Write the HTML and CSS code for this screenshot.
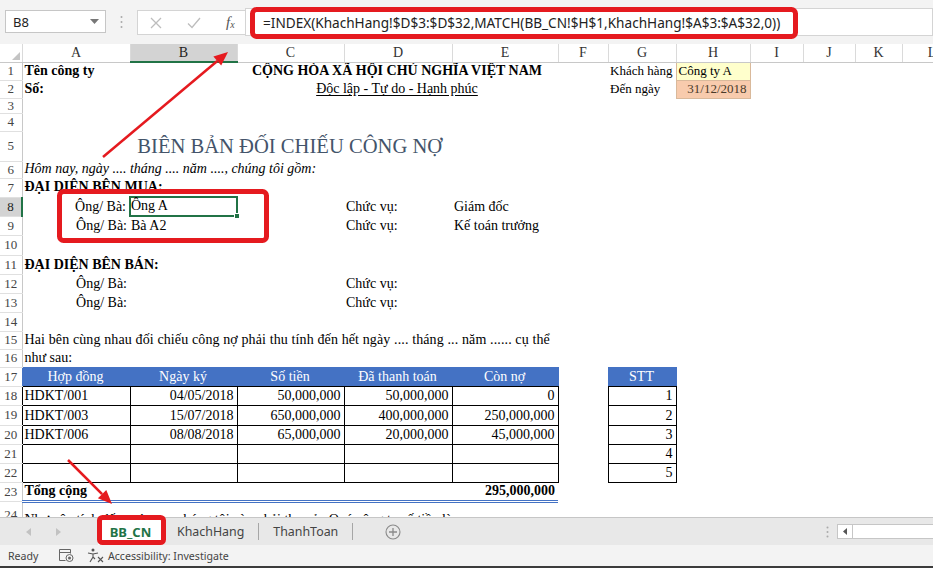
FILE: index.html
```html
<!DOCTYPE html>
<html lang="vi">
<head>
<meta charset="UTF-8">
<meta name="viewport" content="width=device-width, initial-scale=1.0">
<title>BB_CN - Excel</title>
<link rel="stylesheet" href="styles.css">
</head>
<body>
<div class="app">

  <div class="formula-bar">
    <div class="name-box">
      <span>B8</span>
      <svg width="9" height="6" viewBox="0 0 9 6"><path d="M0 0h9L4.5 5z" fill="#777"/></svg>
    </div>
    <div class="grip">
      <svg width="3" height="14" viewBox="0 0 3 14"><circle cx="1.5" cy="2" r="1" fill="#aaa"/><circle cx="1.5" cy="7" r="1" fill="#aaa"/><circle cx="1.5" cy="12" r="1" fill="#aaa"/></svg>
    </div>
    <div class="fx-tools">
      <svg width="12" height="12" viewBox="0 0 12 12"><path d="M1 1l10 10M11 1L1 11" stroke="#bdbdbd" stroke-width="1.3"/></svg>
      <svg width="14" height="12" viewBox="0 0 14 12"><path d="M1 6.5l4 4L13 1" stroke="#bdbdbd" stroke-width="1.3" fill="none"/></svg>
      <span class="fx"><i>f</i><sub>x</sub></span>
    </div>
    <div class="formula-input">=INDEX(KhachHang!$D$3:$D$32,MATCH(BB_CN!$H$1,KhachHang!$A$3:$A$32,0))</div>
  </div>

  <div class="sheet">
    <table class="grid">
      <colgroup>
        <col class="w-rh"><col class="w-a"><col class="w-b"><col class="w-c"><col class="w-d"><col class="w-e">
        <col class="w-f"><col class="w-g"><col class="w-h"><col class="w-i"><col class="w-j"><col class="w-k"><col class="w-l">
      </colgroup>
      <tr class="colhead">
        <th class="corner"><svg width="8" height="8" viewBox="0 0 8 8"><path d="M8 0v8H0z" fill="#c4c4c4"/></svg></th>
        <th>A</th><th class="cur">B</th><th>C</th><th>D</th><th>E</th><th>F</th><th>G</th><th>H</th><th>I</th><th>J</th><th>K</th><th>L</th>
      </tr>
      <tr class="h18">
        <th class="rh">1</th>
        <td class="b" colspan="2">Tên công ty</td>
        <td class="b c" colspan="3">CỘNG HÒA XÃ HỘI CHỦ NGHĨA VIỆT NAM</td>
        <td></td>
        <td class="sm">Khách hàng</td>
        <td class="sm customer">Công ty A</td>
        <td></td><td></td><td></td><td></td>
      </tr>
      <tr class="h17">
        <th class="rh">2</th>
        <td class="b" colspan="2">Số:</td>
        <td class="c" colspan="3"><span class="u">Độc lập - Tự do - Hạnh phúc</span></td>
        <td></td>
        <td class="sm">Đến ngày</td>
        <td class="sm r date">31/12/2018</td>
        <td></td><td></td><td></td><td></td>
      </tr>
      <tr class="h15"><th class="rh">3</th><td colspan="12"></td></tr>
      <tr class="h18"><th class="rh">4</th><td colspan="12"></td></tr>
      <tr class="h30">
        <th class="rh">5</th>
        <td class="title c" colspan="5">BIÊN BẢN ĐỐI CHIẾU CÔNG NỢ</td>
        <td colspan="7"></td>
      </tr>
      <tr class="h17"><th class="rh">6</th><td class="i" colspan="12">Hôm nay, ngày .... tháng .... năm ...., chúng tôi gồm:</td></tr>
      <tr class="h19"><th class="rh">7</th><td class="b" colspan="12">ĐẠI DIỆN BÊN MUA:</td></tr>
      <tr class="h19">
        <th class="rh sel">8</th>
        <td class="r">Ông/ Bà:</td>
        <td class="active">Ông A<span class="handle"></span></td>
        <td></td>
        <td>Chức vụ:</td>
        <td>Giám đốc</td>
        <td colspan="7"></td>
      </tr>
      <tr class="h19">
        <th class="rh">9</th>
        <td class="r">Ông/ Bà:</td>
        <td class="tight">Bà A2</td>
        <td></td>
        <td>Chức vụ:</td>
        <td>Kế toán trưởng</td>
        <td colspan="7"></td>
      </tr>
      <tr class="h20"><th class="rh">10</th><td colspan="12"></td></tr>
      <tr class="h19"><th class="rh">11</th><td class="b" colspan="12">ĐẠI DIỆN BÊN BÁN:</td></tr>
      <tr class="h19">
        <th class="rh">12</th>
        <td class="r">Ông/ Bà:</td><td></td><td></td><td>Chức vụ:</td><td colspan="8"></td>
      </tr>
      <tr class="h19">
        <th class="rh">13</th>
        <td class="r">Ông/ Bà:</td><td></td><td></td><td>Chức vụ:</td><td colspan="8"></td>
      </tr>
      <tr class="h19"><th class="rh">14</th><td colspan="12"></td></tr>
      <tr class="h18"><th class="rh">15</th><td class="wide" colspan="12">Hai bên cùng nhau đối chiếu công nợ phải thu tính đến hết ngày .... tháng ... năm ...... cụ thể</td></tr>
      <tr class="h18"><th class="rh">16</th><td colspan="12">như sau:</td></tr>
      <tr class="h19">
        <th class="rh">17</th>
        <td class="hd">Hợp đồng</td><td class="hd">Ngày ký</td><td class="hd">Số tiền</td><td class="hd">Đã thanh toán</td><td class="hd">Còn nợ</td>
        <td></td>
        <td class="hd">STT</td>
        <td colspan="5"></td>
      </tr>
      <tr class="h19">
        <th class="rh">18</th>
        <td class="t">HDKT/001</td><td class="t r">04/05/2018</td><td class="t r">50,000,000</td><td class="t r">50,000,000</td><td class="t r">0</td>
        <td></td><td class="t r">1</td><td colspan="5"></td>
      </tr>
      <tr class="h20">
        <th class="rh">19</th>
        <td class="t">HDKT/003</td><td class="t r">15/07/2018</td><td class="t r">650,000,000</td><td class="t r">400,000,000</td><td class="t r">250,000,000</td>
        <td></td><td class="t r">2</td><td colspan="5"></td>
      </tr>
      <tr class="h19">
        <th class="rh">20</th>
        <td class="t">HDKT/006</td><td class="t r">08/08/2018</td><td class="t r">65,000,000</td><td class="t r">20,000,000</td><td class="t r">45,000,000</td>
        <td></td><td class="t r">3</td><td colspan="5"></td>
      </tr>
      <tr class="h19">
        <th class="rh">21</th>
        <td class="t"></td><td class="t"></td><td class="t"></td><td class="t"></td><td class="t"></td>
        <td></td><td class="t r">4</td><td colspan="5"></td>
      </tr>
      <tr class="h19">
        <th class="rh">22</th>
        <td class="t"></td><td class="t"></td><td class="t"></td><td class="t"></td><td class="t"></td>
        <td></td><td class="t r">5</td><td colspan="5"></td>
      </tr>
      <tr class="h19">
        <th class="rh">23</th>
        <td class="b total" colspan="4">Tổng cộng</td>
        <td class="b r total">295,000,000</td>
        <td colspan="7"></td>
      </tr>
      <tr class="h28"><th class="rh">24</th><td colspan="12">Như vậy tính đến ngày ...., chúng tôi còn phải thu của Quý công ty số tiền là:</td></tr>
    </table>
  </div>

  <div class="tab-bar">
    <div class="tab-nav">
      <svg width="5" height="8" viewBox="0 0 5 8"><path d="M5 0v8L0 4z" fill="#c2c2c2"/></svg>
      <svg width="5" height="8" viewBox="0 0 5 8"><path d="M0 0v8l5-4z" fill="#c2c2c2"/></svg>
    </div>
    <div class="tab active-tab">BB_CN</div>
    <div class="tab">KhachHang</div>
    <div class="tab-sep"></div>
    <div class="tab">ThanhToan</div>
    <div class="tab-sep"></div>
    <div class="add-sheet">
      <svg width="16" height="16" viewBox="0 0 16 16"><circle cx="8" cy="8" r="7" fill="none" stroke="#8a8a8a" stroke-width="1.1"/><path d="M8 4v8M4 8h8" stroke="#8a8a8a" stroke-width="1.3"/></svg>
    </div>
    <div class="tab-spacer"></div>
    <div class="grip small">
      <svg width="3" height="12" viewBox="0 0 3 12"><circle cx="1.5" cy="1.5" r="1" fill="#aaa"/><circle cx="1.5" cy="6" r="1" fill="#aaa"/><circle cx="1.5" cy="10.5" r="1" fill="#aaa"/></svg>
    </div>
    <div class="hscroll">
      <div class="hscroll-btn"><svg width="4" height="7" viewBox="0 0 4 7"><path d="M4 0v7L0 3.5z" fill="#555"/></svg></div>
    </div>
  </div>

  <div class="status-bar">
    <span class="ready">Ready</span>
    <svg class="macro" width="16" height="15" viewBox="0 0 16 15">
      <path d="M1.5 1.5h11v4M1.5 1.5v11h6M1.5 4.5h11" stroke="#666" fill="none" stroke-width="1"/>
      <circle cx="11.5" cy="10" r="3.5" stroke="#666" fill="none"/><circle cx="11.5" cy="10" r="1.5" fill="#666"/>
    </svg>
    <svg class="a11y" width="18" height="15" viewBox="0 0 18 15">
      <circle cx="6" cy="2" r="1.5" fill="#555"/>
      <path d="M1 5l5 1 5-1M6 6v3l-3 5M6 9l2 2" stroke="#555" fill="none" stroke-width="1.1"/>
      <path d="M11 9l5 5M16 9l-5 5" stroke="#555" stroke-width="1.1"/>
    </svg>
    <span>Accessibility: Investigate</span>
  </div>

  <svg class="marks" width="933" height="568" viewBox="0 0 933 568">
    <rect x="252.5" y="9.5" width="543" height="27" rx="4" fill="none" stroke="#e51a1f" stroke-width="5"/>
    <rect x="59.5" y="191.5" width="207" height="49" rx="4" fill="none" stroke="#e51a1f" stroke-width="5"/>
    <rect x="99.5" y="517.5" width="64" height="25" rx="3" fill="none" stroke="#e51a1f" stroke-width="5"/>
    <path d="M103 157L217.3 61" stroke="#e51a1f" stroke-width="2.5"/>
    <path d="M228 52L221.2 65.6 213.4 56.4z" fill="#e51a1f"/>
    <path d="M68 460L102.1 494.1" stroke="#e51a1f" stroke-width="2.5"/>
    <path d="M112 504L97.9 498.3 106.3 489.9z" fill="#e51a1f"/>
  </svg>

</div>
</body>
</html>
```

FILE: styles.css
```css
* {
    box-sizing: border-box;
}

body {
    margin: 0;
    background: #fff;
    font-family: "Liberation Serif", "Times New Roman", serif;
}

.app {
    position: relative;
    width: 933px;
    height: 568px;
    overflow: hidden;
    background: #f3f3f3;
}

/* formula bar */
.formula-bar {
    height: 44px;
    display: flex;
    align-items: flex-start;
    padding: 10px 0 0 5px;
    font-family: "Noto Sans", "Open Sans", sans-serif;
}

.name-box {
    width: 101px;
    height: 23px;
    display: flex;
    align-items: center;
    justify-content: space-between;
    padding: 0 6px 0 7px;
    background: #fff;
    border: 1px solid #c6c6c6;
    font-size: 13px;
    color: #222;
}

.grip {
    width: 31px;
    height: 23px;
    display: flex;
    align-items: center;
    justify-content: center;
}

.fx-tools {
    width: 108px;
    height: 25px;
    display: flex;
    align-items: center;
    gap: 25px;
    padding: 0 0 0 12px;
    background: #fff;
    border: 1px solid #d4d4d4;
    border-right: none;
}

.fx {
    font-family: "Liberation Serif", serif;
    font-size: 15px;
    color: #555;
}

.fx sub {
    font-size: 10px;
    vertical-align: -1px;
    font-style: italic;
}

.formula-input {
    flex: 1;
    height: 28px;
    margin-top: -2px;
    padding: 4px 0 0 17px;
    background: #fff;
    border: 1px solid #d4d4d4;
    font-size: 13.6px;
    color: #222;
    white-space: nowrap;
}

/* sheet grid */
.sheet {
    height: 473px;
    overflow: hidden;
    background: #fff;
}

.grid {
    border-collapse: collapse;
    table-layout: fixed;
    width: 962px;
    font-size: 14px;
    color: #000;
}

.w-rh { width: 22px; }
.w-a { width: 108px; }
.w-b { width: 107px; }
.w-c { width: 107px; }
.w-d { width: 108px; }
.w-e { width: 106px; }
.w-f { width: 50px; }
.w-g { width: 68px; }
.w-h { width: 74px; }
.w-i { width: 53px; }
.w-j { width: 52px; }
.w-k { width: 47px; }
.w-l { width: 60px; }

.colhead {
    height: 18px;
}

.colhead th {
    padding: 0;
    font-weight: normal;
    font-size: 14px;
    color: #333;
    background: #fff;
    border-right: 1px solid #dadada;
    border-bottom: 1px solid #c8c8c8;
    line-height: 16px;
}

.colhead th.corner {
    text-align: right;
    vertical-align: bottom;
    padding: 0 2px 2px 0;
    line-height: 0;
}

.colhead th.cur {
    background: #d3d3d3;
    border-bottom: 2px solid #217346;
    color: #1f1f1f;
}

.h15 { height: 15px; }
.h17 { height: 17px; }
.h18 { height: 18px; }
.h19 { height: 19px; }
.h20 { height: 20px; }
.h28 { height: 28px; }
.h30 { height: 30px; }

.grid .rh {
    padding: 0;
    font-weight: normal;
    font-size: 13px;
    color: #444;
    background: #fff;
    border-bottom: 1px solid #e0e0e0;
    text-align: center;
    line-height: 14px;
}

.grid .rh.sel {
    background: #d3d3d3;
    color: #222;
}

.grid td {
    padding: 0 3px 1px 2px;
    white-space: nowrap;
    overflow: hidden;
    vertical-align: bottom;
    line-height: 16px;
}

.grid .rh + td {
    border-left: 1px solid #c8c8c8;
}

.grid .rh.sel + td {
    border-left: 2px solid #217346;
}

.b { font-weight: bold; }
.i { font-style: italic; }
.c { text-align: center; }
.r { text-align: right; }

.grid td.sm {
    font-size: 13px;
}

.grid td.wide {
    letter-spacing: 0.12px;
}

.u {
    text-decoration: underline;
    text-underline-offset: 2px;
}

.grid td.title {
    font-size: 20.6px;
    color: #44546a;
    vertical-align: middle;
    padding-bottom: 0;
}

.customer {
    background: #ffffcc;
    border: 1px solid #d9b99b;
}

.date {
    background: #f8cbad;
    border: 1px solid #d9b99b;
    color: #4a3a2a;
}

.grid td.tight {
    padding-left: 1px;
}

.grid td.active {
    position: relative;
    overflow: visible;
    padding-left: 0;
    border: 2px solid #217346;
}

.handle {
    position: absolute;
    right: -4px;
    bottom: -4px;
    width: 6px;
    height: 6px;
    background: #217346;
    border: 1px solid #fff;
}

.grid td.hd {
    background: #4472c4;
    color: #fff;
    text-align: center;
    border: 1px solid #4472c4;
    border-bottom: 1px solid #000;
}

.grid td.t {
    border: 1px solid #000;
}

.grid .rh + td.t {
    border-left: 1px solid #000;
}

.grid td.total {
    border-bottom: 3px double #4472c4;
}

/* sheet tabs */
.tab-bar {
    height: 28px;
    display: flex;
    align-items: stretch;
    background: #e8e8e8;
    border-top: 1px solid #c6c6c6;
    font-family: "Noto Sans", "Open Sans", sans-serif;
    font-size: 12.4px;
    color: #444;
}

.tab-nav {
    width: 98px;
    display: flex;
    align-items: center;
    gap: 25px;
    padding-left: 26px;
}

.tab {
    display: flex;
    align-items: center;
    padding: 0 14px;
}

.active-tab {
    width: 65px;
    justify-content: center;
    padding: 0;
    background: #fff;
    color: #217346;
    font-weight: bold;
    font-size: 13px;
}

.tab-sep {
    width: 1px;
    margin: 5px 0;
    background: #a6a6a6;
}

.add-sheet {
    display: flex;
    align-items: center;
    padding-left: 32px;
}

.tab-spacer {
    flex: 1;
}

.grip.small {
    width: 14px;
    height: auto;
}

.hscroll {
    width: 96px;
    margin: 6px 0 6px 3px;
    background: #fff;
    border: 1px solid #c6c6c6;
    border-right: none;
}

.hscroll-btn {
    width: 15px;
    height: 100%;
    display: flex;
    align-items: center;
    justify-content: center;
    border-right: 1px solid #c6c6c6;
}

/* status bar */
.status-bar {
    height: 23px;
    display: flex;
    align-items: center;
    gap: 3px;
    padding-left: 8px;
    background: #f3f3f3;
    border-bottom: 2px solid #3c3c3c;
    font-family: "Noto Sans", "Open Sans", sans-serif;
    font-size: 10.6px;
    color: #444;
}

.ready {
    width: 47px;
}

.macro {
    margin-right: 10px;
}

.marks {
    position: absolute;
    top: 0;
    left: 0;
    pointer-events: none;
}
```
